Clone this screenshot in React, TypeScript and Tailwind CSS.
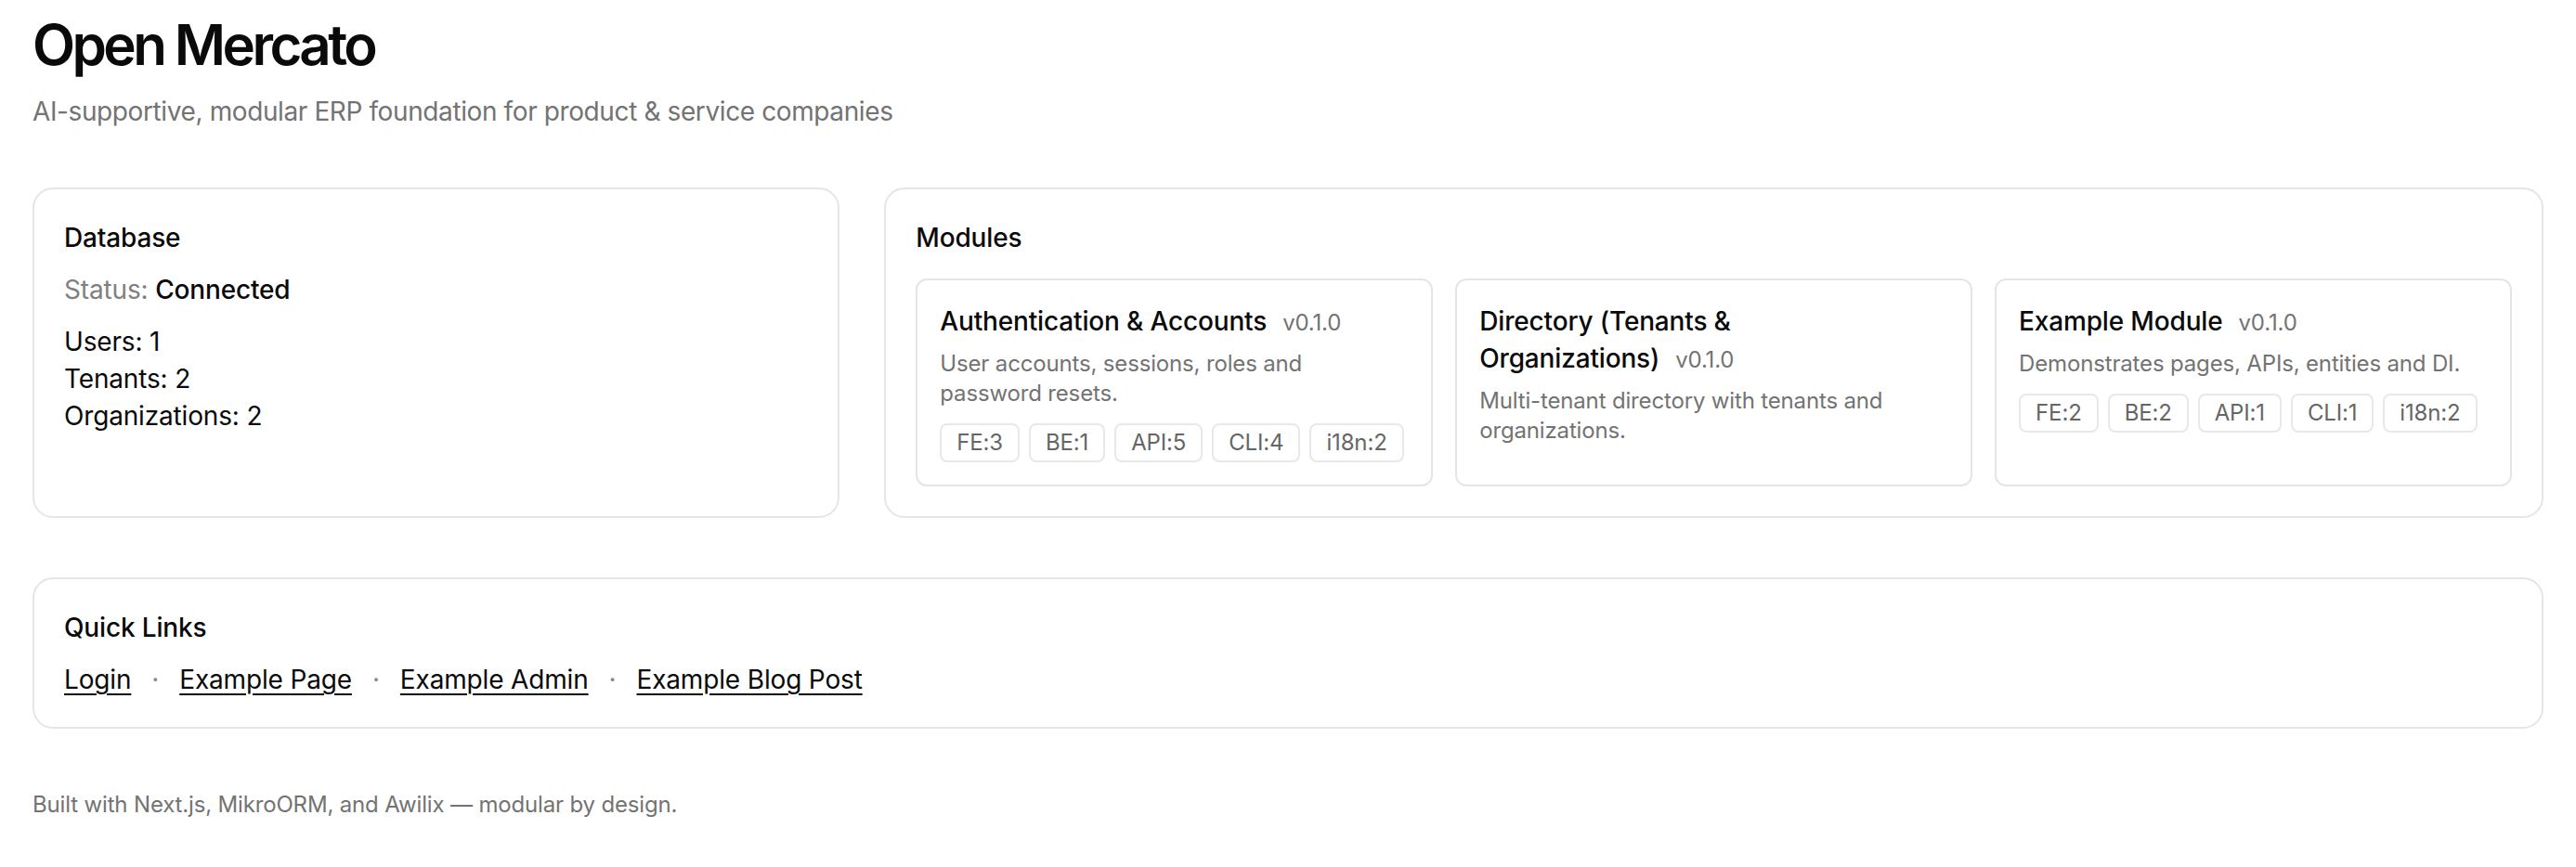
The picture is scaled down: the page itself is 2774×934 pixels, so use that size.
const modules = [
  {
    title: 'Authentication & Accounts',
    version: 'v0.1.0',
    description: 'User accounts, sessions, roles and password resets.',
    counts: ['FE:3', 'BE:1', 'API:5', 'CLI:4', 'i18n:2'],
  },
  {
    title: 'Directory (Tenants & Organizations)',
    version: 'v0.1.0',
    description: 'Multi-tenant directory with tenants and organizations.',
    counts: [],
  },
  {
    title: 'Example Module',
    version: 'v0.1.0',
    description: 'Demonstrates pages, APIs, entities and DI.',
    counts: ['FE:2', 'BE:2', 'API:1', 'CLI:1', 'i18n:2'],
  },
];

const links = ['Login', 'Example Page', 'Example Admin', 'Example Blog Post'];

export default function App() {
  return (
    <div className="min-h-screen bg-white px-[35px] pt-[12px] font-['Inter',sans-serif] tracking-[-0.01em] text-[#0a0a0a]">
      {/* Header */}
      <h1 className="text-[60px] leading-[72px] font-semibold tracking-[-0.06em]">Open Mercato</h1>
      <p className="mt-[16px] text-[28px] leading-[40px] tracking-[-0.014em] text-[#737373]">
        AI-supportive, modular ERP foundation for product &amp; service companies
      </p>

      <div className="mt-[62px] grid grid-cols-3 gap-[48px]">
        {/* Database */}
        <section className="rounded-[22px] border-2 border-[#e5e5e5] p-[32px]">
          <h2 className="text-[28px] leading-[40px] font-medium">Database</h2>
          <div className="mt-[16px] text-[28px] leading-[40px]">
            <span className="text-[#808080]">Status: </span>
            <span className="font-medium">Connected</span>
          </div>
          <div className="mt-[16px] text-[28px] leading-[40px]">
            <div>Users: 1</div>
            <div>Tenants: 2</div>
            <div>Organizations: 2</div>
          </div>
        </section>

        {/* Modules */}
        <section className="col-span-2 rounded-[22px] border-2 border-[#e5e5e5] p-[32px]">
          <h2 className="text-[28px] leading-[40px] font-medium">Modules</h2>
          <div className="mt-[24px] grid grid-cols-3 gap-[24px]">
            {modules.map((m) => (
              <div key={m.title} className="rounded-[12px] border-2 border-[#e5e5e5] p-[24px]">
                <div className="text-[28px] leading-[40px] font-medium">
                  <span>{m.title}</span>
                  <span className="ml-[17px] text-[24px] font-normal text-[#737373]">{m.version}</span>
                </div>
                <p className="mt-[8px] text-[24px] leading-[32px] text-[#737373]">{m.description}</p>
                {m.counts.length > 0 && (
                  <div className="mt-[16px] flex flex-wrap gap-[10px]">
                    {m.counts.map((c) => (
                      <span
                        key={c}
                        className="rounded-[8px] border-2 border-[#e8e8e8] px-[16px] py-[4px] text-[24px] leading-[30px] text-[#666666]"
                      >
                        {c}
                      </span>
                    ))}
                  </div>
                )}
              </div>
            ))}
          </div>
        </section>
      </div>

      {/* Quick Links */}
      <section className="mt-[64px] rounded-[22px] border-2 border-[#e5e5e5] px-[32px] pt-[32px] pb-[31px]">
        <h2 className="text-[28px] leading-[40px] font-medium">Quick Links</h2>
        <div className="mt-[16px] flex items-center text-[28px] leading-[40px]">
          {links.map((l, i) => (
            <span key={l} className="flex items-center">
              {i > 0 && <span className="px-[22px] text-[#8a8a8a]">·</span>}
              <a href="#" className="underline underline-offset-[5px] decoration-2">
                {l}
              </a>
            </span>
          ))}
        </div>
      </section>

      <footer className="mt-[66px] text-[24px] leading-[32px] text-[#737373]">
        Built with Next.js, MikroORM, and Awilix — modular by design.
      </footer>
    </div>
  );
}
